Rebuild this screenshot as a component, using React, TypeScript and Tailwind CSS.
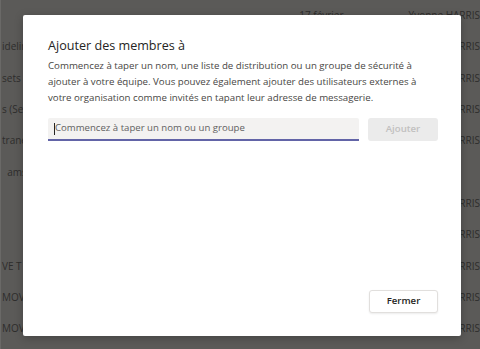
import React from 'react';

// rows of the list behind the dialog
const rows = [
  { left: '', date: '17 février', name: 'Yvonne HARRIS' },
  { left: 'idelines', date: '', name: 'Yvonne HARRIS' },
  { left: 'sets (', date: '', name: 'Yvonne HARRIS' },
  { left: 's (Se', date: '', name: 'Yvonne HARRIS' },
  { left: 'tranet', date: '', name: 'Yvonne HARRIS' },
  { left: '  ams', date: '', name: '' },
  { left: '', date: '', name: 'Yvonne HARRIS' },
  { left: '', date: '', name: 'Yvonne HARRIS' },
  { left: 'VE T', date: '', name: 'Yvonne HARRIS' },
  { left: 'MOVE', date: '', name: 'Yvonne HARRIS' },
  { left: 'MOVE', date: '', name: 'Yvonne HARRIS' },
];

function App() {
  return (
    <div
      className="relative w-[480px] h-[349px] overflow-hidden bg-[#5b5a58] border-l border-[#6a6967]"
      style={{ fontFamily: '"Open Sans", "Noto Sans", sans-serif' }}
    >
      {/* Background list (dimmed) */}
      <div className="flex flex-col text-[10px] text-[#2e2d2c]">
        {rows.map((r, i) => (
          <div key={i} className="flex items-center h-[31.3px] whitespace-nowrap">
            <div className="w-[300px] pl-[1px] whitespace-pre">{r.left}</div>
            <div className="w-[110px]">{r.date}</div>
            <div>{r.name}</div>
          </div>
        ))}
      </div>

      {/* Dialog */}
      <div className="absolute left-[22px] top-[15px] w-[438px] h-[321px] bg-white rounded-[2px] shadow-[0_2px_8px_rgba(0,0,0,0.25)] flex flex-col pl-[25px] pr-[23px] pt-[21px] pb-[23px]">
        <h2 className="text-[12.6px] leading-[19px] text-[#252423] font-medium">Ajouter des membres à</h2>
        <p className="mt-[3px] text-[9.7px] leading-[16px] text-[#484644]">
          Commencez à taper un nom, une liste de distribution ou un groupe de sécurité à ajouter à votre équipe. Vous pouvez également ajouter des utilisateurs externes à votre organisation comme invités en tapant leur adresse de messagerie.
        </p>

        <div className="mt-[12px] flex items-start gap-[9px]">
          <div className="relative flex-1 h-[23px] bg-[#f3f2f1] border-b-2 border-[#6264a7] rounded-t-[2px] flex items-center pl-[7px]">
            <span className="absolute left-[6px] top-[5px] w-px h-[12px] bg-[#252423]" />
            <span className="text-[9.6px] text-[#616161]">Commencez à taper un nom ou un groupe</span>
          </div>
          <button className="w-[70px] h-[23px] rounded-[3px] bg-[#ebebeb] text-[9.6px] font-semibold text-[#c1c0bf]">
            Ajouter
          </button>
        </div>

        <div className="flex-1" />

        <div className="flex justify-end">
          <button className="w-[69px] h-[23px] rounded-[3px] bg-white border border-[#e1dfdd] shadow-[0_1px_2px_rgba(0,0,0,0.08)] text-[9.6px] font-semibold text-[#252423]">
            Fermer
          </button>
        </div>
      </div>
    </div>
  );
}

export default App;
